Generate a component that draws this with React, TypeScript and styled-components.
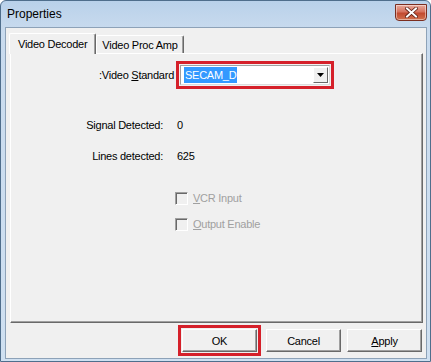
import React from 'react';
import styled, { createGlobalStyle } from 'styled-components';

const GlobalStyle = createGlobalStyle`
  html, body {
    margin: 0;
    padding: 0;
    background: #ffffff;
  }
  body {
    font-family: "Liberation Sans", Arial, sans-serif;
    font-size: 11px;
    letter-spacing: -0.25px;
    color: #000;
  }
`;

const Window = styled.div`
  width: 431px;
  height: 362px;
  box-sizing: border-box;
  display: flex;
  flex-direction: column;
  background: linear-gradient(#b9d1ea, #c9dbee 30px, #cfe0f1);
  border: 1px solid #4f6e8c;
  border-radius: 6px 6px 0 0;
  padding: 0 3px 2px 4px;
`;

const TitleBar = styled.div`
  height: 26px;
  display: flex;
  align-items: center;
  justify-content: space-between;
  padding: 0 0 0 2px;
`;

const Title = styled.span`
  font-size: 12px;
  letter-spacing: 0;
  color: #000;
`;

const CloseButton = styled.div`
  width: 32px;
  height: 17px;
  margin-top: -4px;
  box-sizing: border-box;
  border: 1px solid #7b2e20;
  border-radius: 0 0 4px 4px;
  background: linear-gradient(#e9a99b, #d6735f 45%, #c24a30 55%, #d1714e);
  box-shadow: inset 0 0 0 1px rgba(255, 255, 255, 0.45);
  display: flex;
  align-items: center;
  justify-content: center;
`;

const Client = styled.div`
  flex: 1;
  display: flex;
  flex-direction: column;
  background: #f0f0f0;
  border: 1px solid #8da2b8;
  padding: 5px 4px 0 3px;
`;

const TabRow = styled.div`
  display: flex;
  align-items: flex-end;
  height: 20px;
  position: relative;
  z-index: 1;
`;

const Tab = styled.div<{ $active?: boolean }>`
  box-sizing: border-box;
  height: ${(p) => (p.$active ? '21px' : '18px')};
  padding: 0 ${(p) => (p.$active ? '8px' : '5px')};
  display: flex;
  align-items: center;
  background: #f0f0f0;
  border-top: 1px solid #ffffff;
  border-left: 1px solid #ffffff;
  border-right: 1px solid #696969;
  box-shadow: inset -1px 0 #a0a0a0;
  border-radius: 2px 2px 0 0;
  margin-bottom: ${(p) => (p.$active ? '-1px' : '0')};
`;

const Panel = styled.div`
  width: 413px;
  height: 270px;
  box-sizing: border-box;
  margin-left: 1px;
  border-top: 1px solid #ffffff;
  border-left: 1px solid #ffffff;
  border-right: 1px solid #696969;
  border-bottom: 1px solid #696969;
  box-shadow: inset -1px -1px #a0a0a0;
  display: flex;
  flex-direction: column;
  padding-top: 11px;
`;

const StandardRow = styled.div`
  display: flex;
  align-items: center;
  height: 20px;
`;

const Label = styled.span<{ $width: number }>`
  width: ${(p) => p.$width}px;
  text-align: right;
  white-space: nowrap;
`;

const Combo = styled.div`
  margin-left: 6px;
  width: 150px;
  height: 20px;
  box-sizing: border-box;
  border: 1px solid #a0a0a0;
  border-right-color: #dcdcdc;
  border-bottom-color: #dcdcdc;
  background: #ffffff;
  display: flex;
  align-items: center;
  padding: 1px 1px 1px 3px;
  outline: 3px solid #d5202a;
  outline-offset: 1px;
`;

const Selected = styled.span`
  background: #3399ff;
  color: #ffffff;
  padding: 1px 1px;
  line-height: 14px;
`;

const DropButton = styled.div`
  margin-left: auto;
  width: 15px;
  height: 16px;
  box-sizing: border-box;
  background: #f0f0f0;
  border: 1px solid;
  border-color: #ffffff #696969 #696969 #ffffff;
  display: flex;
  align-items: center;
  justify-content: center;
`;

const InfoRow = styled.div<{ $gap: number }>`
  display: flex;
  align-items: center;
  height: 14px;
  margin-top: ${(p) => p.$gap}px;
`;

const Value = styled.span`
  margin-left: 14px;
`;

const CheckRow = styled.div<{ $gap: number }>`
  display: flex;
  align-items: center;
  height: 14px;
  margin-top: ${(p) => p.$gap}px;
  margin-left: 164px;
  color: #a0a0a0;
`;

const Box = styled.span`
  width: 13px;
  height: 13px;
  box-sizing: border-box;
  border: 1px solid;
  border-color: #a0a0a0 #ffffff #ffffff #a0a0a0;
  box-shadow: inset 1px 1px #696969;
  background: #f0f0f0;
  margin-right: 5px;
`;

const Key = styled.span`
  text-decoration: underline;
`;

const ButtonRow = styled.div`
  display: flex;
  justify-content: flex-end;
  gap: 6px;
  margin-top: 6px;
`;

const Button = styled.div<{ $marked?: boolean }>`
  width: 75px;
  height: 23px;
  box-sizing: border-box;
  display: flex;
  align-items: center;
  justify-content: center;
  background: #f0f0f0;
  border: 1px solid;
  border-color: #ffffff #696969 #696969 #ffffff;
  box-shadow: inset -1px -1px #a0a0a0;
  outline: ${(p) => (p.$marked ? '3px solid #d5202a' : 'none')};
  outline-offset: 1px;
  margin-right: ${(p) => (p.$marked ? '3px' : '0')};
`;

const CloseIcon = () => (
  <svg width="13" height="11" viewBox="0 0 13 11">
    <path
      d="M2 1.5 L11 9.5 M11 1.5 L2 9.5"
      stroke="#5a1d12"
      strokeWidth="3.6"
      strokeLinecap="square"
      fill="none"
    />
    <path
      d="M2 1.5 L11 9.5 M11 1.5 L2 9.5"
      stroke="#ffffff"
      strokeWidth="2"
      strokeLinecap="square"
      fill="none"
    />
  </svg>
);

const ArrowIcon = () => (
  <svg width="7" height="4" viewBox="0 0 7 4">
    <path d="M0 0 H7 L3.5 4 Z" fill="#000" />
  </svg>
);

const App = () => (
  <>
    <GlobalStyle />
    <Window>
      <TitleBar>
        <Title>Properties</Title>
        <CloseButton>
          <CloseIcon />
        </CloseButton>
      </TitleBar>
      <Client>
        <TabRow>
          <Tab $active>Video Decoder</Tab>
          <Tab>Video Proc Amp</Tab>
        </TabRow>
        <Panel>
          <StandardRow>
            <Label $width={163}>
              :Video <Key>S</Key>tandard
            </Label>
            <Combo>
              <Selected>SECAM_D</Selected>
              <DropButton>
                <ArrowIcon />
              </DropButton>
            </Combo>
          </StandardRow>
          <InfoRow $gap={33}>
            <Label $width={152}>Signal Detected:</Label>
            <Value>0</Value>
          </InfoRow>
          <InfoRow $gap={17}>
            <Label $width={152}>Lines detected:</Label>
            <Value>625</Value>
          </InfoRow>
          <CheckRow $gap={28}>
            <Box />
            <span>
              <Key>V</Key>CR Input
            </span>
          </CheckRow>
          <CheckRow $gap={12}>
            <Box />
            <span>
              <Key>O</Key>utput Enable
            </span>
          </CheckRow>
        </Panel>
        <ButtonRow>
          <Button $marked>OK</Button>
          <Button>Cancel</Button>
          <Button>
            <span>
              <Key>A</Key>pply
            </span>
          </Button>
        </ButtonRow>
      </Client>
    </Window>
  </>
);

export default App;
